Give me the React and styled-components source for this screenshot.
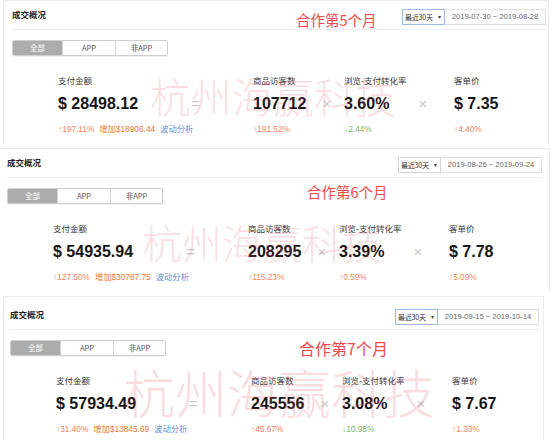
import React from "react";
import styled, { createGlobalStyle } from "styled-components";

const GlobalStyle = createGlobalStyle`
  body {
    margin: 0;
    background: #fff;
    font-family: "Noto Sans CJK SC", "Liberation Sans", sans-serif;
  }
`;

const Page = styled.div`
  width: 554px;
  height: 448px;
  overflow: hidden;
  background: #fff;
`;

const Panel = styled.section`
  position: relative;
  box-sizing: border-box;
  width: ${(p) => p.$w}px;
  height: ${(p) => p.$h}px;
  margin: ${(p) => p.$mt}px 0 0 ${(p) => p.$ml}px;
  padding: ${(p) => p.$pt}px ${(p) => p.$pr}px 0 ${(p) => p.$pl}px;
  border: 1px solid #ececec;
  border-bottom-color: transparent;
  background: #fff;
`;

const Header = styled.header`
  display: flex;
  align-items: center;
  justify-content: space-between;
  height: 28px;
  border-bottom: 1px solid #ededed;
`;

const Title = styled.h2`
  margin: 0 0 3px;
  font-size: 8.5px;
  font-weight: 700;
  color: #222;
`;

const Picker = styled.div`
  display: flex;
  height: 16px;
  margin-top: 3px;
  font-size: 7.5px;
  color: #555;
  white-space: nowrap;
`;

const Select = styled.div`
  box-sizing: border-box;
  display: flex;
  align-items: center;
  justify-content: space-between;
  width: 43px;
  padding: 0 3px 0 2px;
  border: 1px solid ${(p) => (p.$focus ? "#9dbbe6" : "#d6d6d6")};
  font-size: 7px;
  letter-spacing: -0.2px;
  color: #333;
  &::after {
    content: "▾";
    font-size: 6px;
    color: #444;
  }
`;

const Range = styled.div`
  box-sizing: border-box;
  flex: 1;
  display: flex;
  align-items: center;
  justify-content: center;
  min-width: 101px;
  border: 1px solid #dedede;
  border-left: none;
  font-family: "Liberation Sans", sans-serif;
  font-size: 7.6px;
  color: #666;
`;

const Tabs = styled.div`
  display: inline-flex;
  margin-top: 10px;
  border: 1px solid #cfcfcf;
  border-radius: 2px;
  overflow: hidden;
  box-shadow: 0 1px 1px rgba(0, 0, 0, 0.06);
`;

const Tab = styled.div`
  width: ${(p) => p.$w}px;
  height: 14px;
  line-height: 14px;
  text-align: center;
  font-size: 7.5px;
  color: ${(p) => (p.$active ? "#fff" : "#555")};
  background: ${(p) => (p.$active ? "#acacac" : "#fff")};
  & + & {
    border-left: 1px solid #d4d4d4;
  }
`;

const Metrics = styled.div`
  display: grid;
  grid-template-columns: 80px 115px 57px 34px 48px 62px 1fr;
  margin-top: 18px;
  padding-left: 46px;
`;

const Metric = styled.div`
  display: flex;
  flex-direction: column;
  white-space: nowrap;
`;

const Label = styled.div`
  height: 12px;
  line-height: 12px;
  font-size: 8.5px;
  color: #3a3a3a;
`;

const Value = styled.div`
  height: 24px;
  margin-top: 6px;
  line-height: 24px;
  font-family: "Liberation Sans", sans-serif;
  font-size: 16px;
  font-weight: 700;
  color: #151515;
`;

const Subs = styled.div`
  display: flex;
  gap: 5px;
  height: 12px;
  margin-top: 7px;
  line-height: 12px;
  font-size: 8.3px;
`;

const toneColor = {
  up: "#f5845a",
  inc: "#f07a35",
  down: "#76b96e",
  link: "#5f8fd8",
};

const Sub = styled.span`
  color: ${(p) => toneColor[p.$tone]};
  font-family: "Liberation Sans", "Noto Sans CJK SC", sans-serif;
  & + & {
    margin-left: ${(p) => (p.$tone === "link" ? 3 : 0)}px;
  }
`;

const Op = styled.div`
  justify-self: center;
  height: 24px;
  margin-top: 18px;
  line-height: 24px;
  font-family: "Liberation Sans", sans-serif;
  font-size: 15px;
  color: #c9c9c9;
`;

const Note = styled.div`
  position: absolute;
  left: ${(p) => p.$x}px;
  top: ${(p) => p.$y}px;
  font-size: ${(p) => p.$size}px;
  line-height: 1;
  color: #f2494a;
  white-space: nowrap;
`;

const Watermark = styled.div`
  position: absolute;
  left: ${(p) => p.$x}px;
  top: ${(p) => p.$y}px;
  font-size: ${(p) => p.$size}px;
  font-weight: 300;
  line-height: 1;
  color: rgba(232, 80, 95, 0.2);
  white-space: nowrap;
  pointer-events: none;
`;

const panels = [
  {
    box: { mt: 0, ml: 3, w: 546, h: 145, pt: 0, pl: 8, pr: 2 },
    focus: true,
    range: "2019-07-30 ~ 2019-08-28",
    note: { text: "合作第5个月", x: 292, y: 12, size: 14.5 },
    mark: { x: 146, y: 74, size: 41 },
    metrics: [
      { label: "支付金额", value: "$ 28498.12", subs: [["up", "↑197.11%"], ["inc", "增加$18906.44"], ["link", "波动分析"]] },
      { label: "商品访客数", value: "107712", subs: [["up", "↑191.52%"]] },
      { label: "浏览-支付转化率", value: "3.60%", subs: [["down", "↓2.44%"]] },
      { label: "客单价", value: "$ 7.35", subs: [["up", "↑4.40%"]] },
    ],
  },
  {
    box: { mt: 3, ml: -2, w: 552, h: 145, pt: 0, pl: 8, pr: 7 },
    focus: false,
    range: "2019-08-26 ~ 2019-09-24",
    note: { text: "合作第6个月", x: 308, y: 36, size: 14.5 },
    mark: { x: 143, y: 73, size: 40 },
    metrics: [
      { label: "支付金额", value: "$ 54935.94", subs: [["up", "↑127.50%"], ["inc", "增加$30787.75"], ["link", "波动分析"]] },
      { label: "商品访客数", value: "208295", subs: [["up", "↑115.23%"]] },
      { label: "浏览-支付转化率", value: "3.39%", subs: [["up", "↑0.59%"]] },
      { label: "客单价", value: "$ 7.78", subs: [["up", "↑5.09%"]] },
    ],
  },
  {
    box: { mt: 3, ml: 3, w: 541, h: 144, pt: 4, pl: 6, pr: 4 },
    focus: true,
    range: "2019-09-15 ~ 2019-10-14",
    note: { text: "合作第7个月", x: 295, y: 43, size: 16 },
    mark: { x: 119, y: 69, size: 52 },
    metrics: [
      { label: "支付金额", value: "$ 57934.49", subs: [["up", "↑31.40%"], ["inc", "增加$13845.69"], ["link", "波动分析"]] },
      { label: "商品访客数", value: "245556", subs: [["up", "↑45.67%"]] },
      { label: "浏览-支付转化率", value: "3.08%", subs: [["down", "↓10.98%"]] },
      { label: "客单价", value: "$ 7.67", subs: [["up", "↑1.33%"]] },
    ],
  },
];

const ops = ["=", "×", "×"];

function MetricCell({ m }) {
  return (
    <Metric>
      <Label>{m.label}</Label>
      <Value>{m.value}</Value>
      <Subs>
        {m.subs.map(([tone, text]) => (
          <Sub key={text} $tone={tone}>
            {text}
          </Sub>
        ))}
      </Subs>
    </Metric>
  );
}

function DealPanel({ data }) {
  const { box } = data;
  return (
    <Panel $mt={box.mt} $ml={box.ml} $w={box.w} $h={box.h} $pt={box.pt} $pl={box.pl} $pr={box.pr}>
      <Header>
        <Title>成交概况</Title>
        <Picker>
          <Select $focus={data.focus}>最近30天</Select>
          <Range>{data.range}</Range>
        </Picker>
      </Header>
      <Tabs>
        <Tab $w={49} $active>全部</Tab>
        <Tab $w={52}>APP</Tab>
        <Tab $w={51}>非APP</Tab>
      </Tabs>
      <Metrics>
        {data.metrics.map((m, i) => (
          <React.Fragment key={m.label}>
            <MetricCell m={m} />
            {i < ops.length && <Op>{ops[i]}</Op>}
          </React.Fragment>
        ))}
      </Metrics>
      <Note $x={data.note.x} $y={data.note.y} $size={data.note.size}>
        {data.note.text}
      </Note>
      <Watermark $x={data.mark.x} $y={data.mark.y} $size={data.mark.size}>
        杭州海赢科技
      </Watermark>
    </Panel>
  );
}

export default function App() {
  return (
    <Page>
      <GlobalStyle />
      {panels.map((p) => (
        <DealPanel key={p.range} data={p} />
      ))}
    </Page>
  );
}
